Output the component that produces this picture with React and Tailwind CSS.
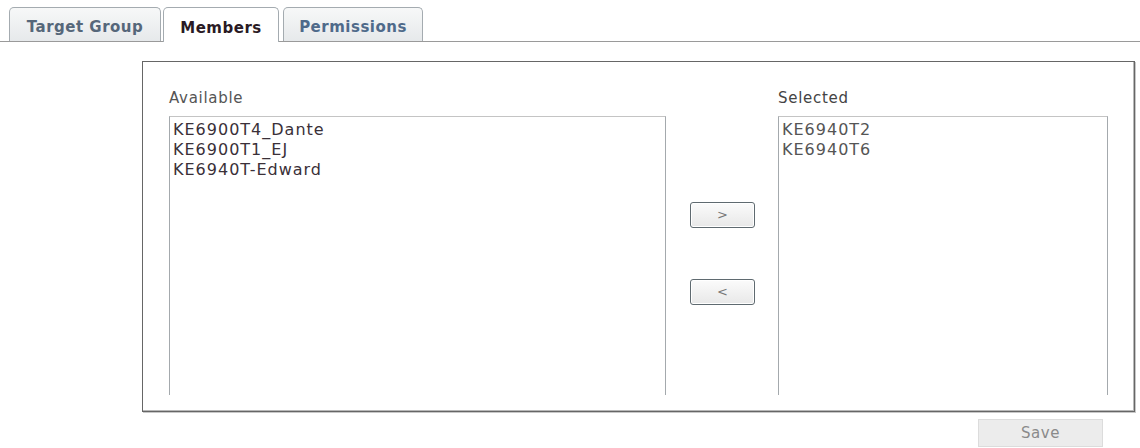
export default function App() {
  const available = ["KE6900T4_Dante", "KE6900T1_EJ", "KE6940T-Edward"];
  const selected = ["KE6940T2", "KE6940T6"];

  return (
    <div className="w-[1140px] h-[448px] bg-white overflow-hidden font-['DejaVu_Sans',Verdana,sans-serif]">
      {/* tabs */}
      <div className="h-[42px] flex items-end pl-[9px] border-b border-[#9a9a9a]">
        <div className="w-[152px] h-[34px] flex items-center justify-center pt-[6px] rounded-t-[5px] border border-b-0 border-[#a4abb0] bg-gradient-to-b from-[#f7f8f8] to-[#e6e9eb] text-[15px] font-bold tracking-[0.5px] text-[#56677a]">
          Target Group
        </div>
        <div className="ml-[2px] -mb-px w-[116px] h-[35px] flex items-center justify-center pt-[6px] rounded-t-[5px] border border-b-0 border-[#a4abb0] bg-white text-[15px] font-bold tracking-[0.5px] text-[#2a1a24]">
          Members
        </div>
        <div className="ml-[4px] w-[140px] h-[34px] flex items-center justify-center pt-[6px] rounded-t-[5px] border border-b-0 border-[#a4abb0] bg-gradient-to-b from-[#f7f8f8] to-[#e6e9eb] text-[15px] font-bold tracking-[0.5px] text-[#4f6a8a]">
          Permissions
        </div>
      </div>

      {/* members box */}
      <div className="ml-[142px] mt-[19px] w-[993px] h-[351px] border border-[#666] shadow-[inset_-1px_-1px_0_#b8b8b8,1px_1px_0_#c8c8c8] flex pl-[26px] pt-[26px]">
        <div className="w-[497px] flex flex-col">
          <div className="h-[20px] leading-[20px] text-[15px] tracking-[0.7px] text-[#555]">Available</div>
          <div className="mt-[8px] h-[279px] border border-b-0 border-[#a4a9ad] border-t-[#c4c4c4] px-[3px] pt-[3px] text-[16px] leading-[20px] tracking-[1px] text-[#3a3038]">
            {available.map((a) => (
              <div key={a}>{a}</div>
            ))}
          </div>
        </div>

        <div className="ml-[24px] w-[65px] flex flex-col pt-[114px] gap-[51px]">
          <button className="h-[26px] w-[65px] rounded-[3px] border border-[#5f6a70] bg-gradient-to-b from-[#fbfbfb] to-[#e8e8e8] text-[13px] text-[#777] shadow-[inset_0_0_0_1px_#ffffff]">
            &gt;
          </button>
          <button className="h-[26px] w-[65px] rounded-[3px] border border-[#5f6a70] bg-gradient-to-b from-[#fbfbfb] to-[#e8e8e8] text-[13px] text-[#777] shadow-[inset_0_0_0_1px_#ffffff]">
            &lt;
          </button>
        </div>

        <div className="ml-[23px] w-[330px] flex flex-col">
          <div className="h-[20px] leading-[20px] text-[15px] tracking-[0.7px] text-[#444]">Selected</div>
          <div className="mt-[8px] h-[279px] border border-b-0 border-[#a4a9ad] border-t-[#c4c4c4] px-[3px] pt-[3px] text-[16px] leading-[20px] tracking-[1px] text-[#555]">
            {selected.map((s) => (
              <div key={s}>{s}</div>
            ))}
          </div>
        </div>
      </div>

      <div className="flex">
        <button className="ml-[978px] mt-[7px] w-[125px] h-[28px] border border-[#dcdcdc] bg-[#ececec] text-[15px] text-[#8a8a8a] tracking-[0.5px]">
          Save
        </button>
      </div>
    </div>
  );
}
